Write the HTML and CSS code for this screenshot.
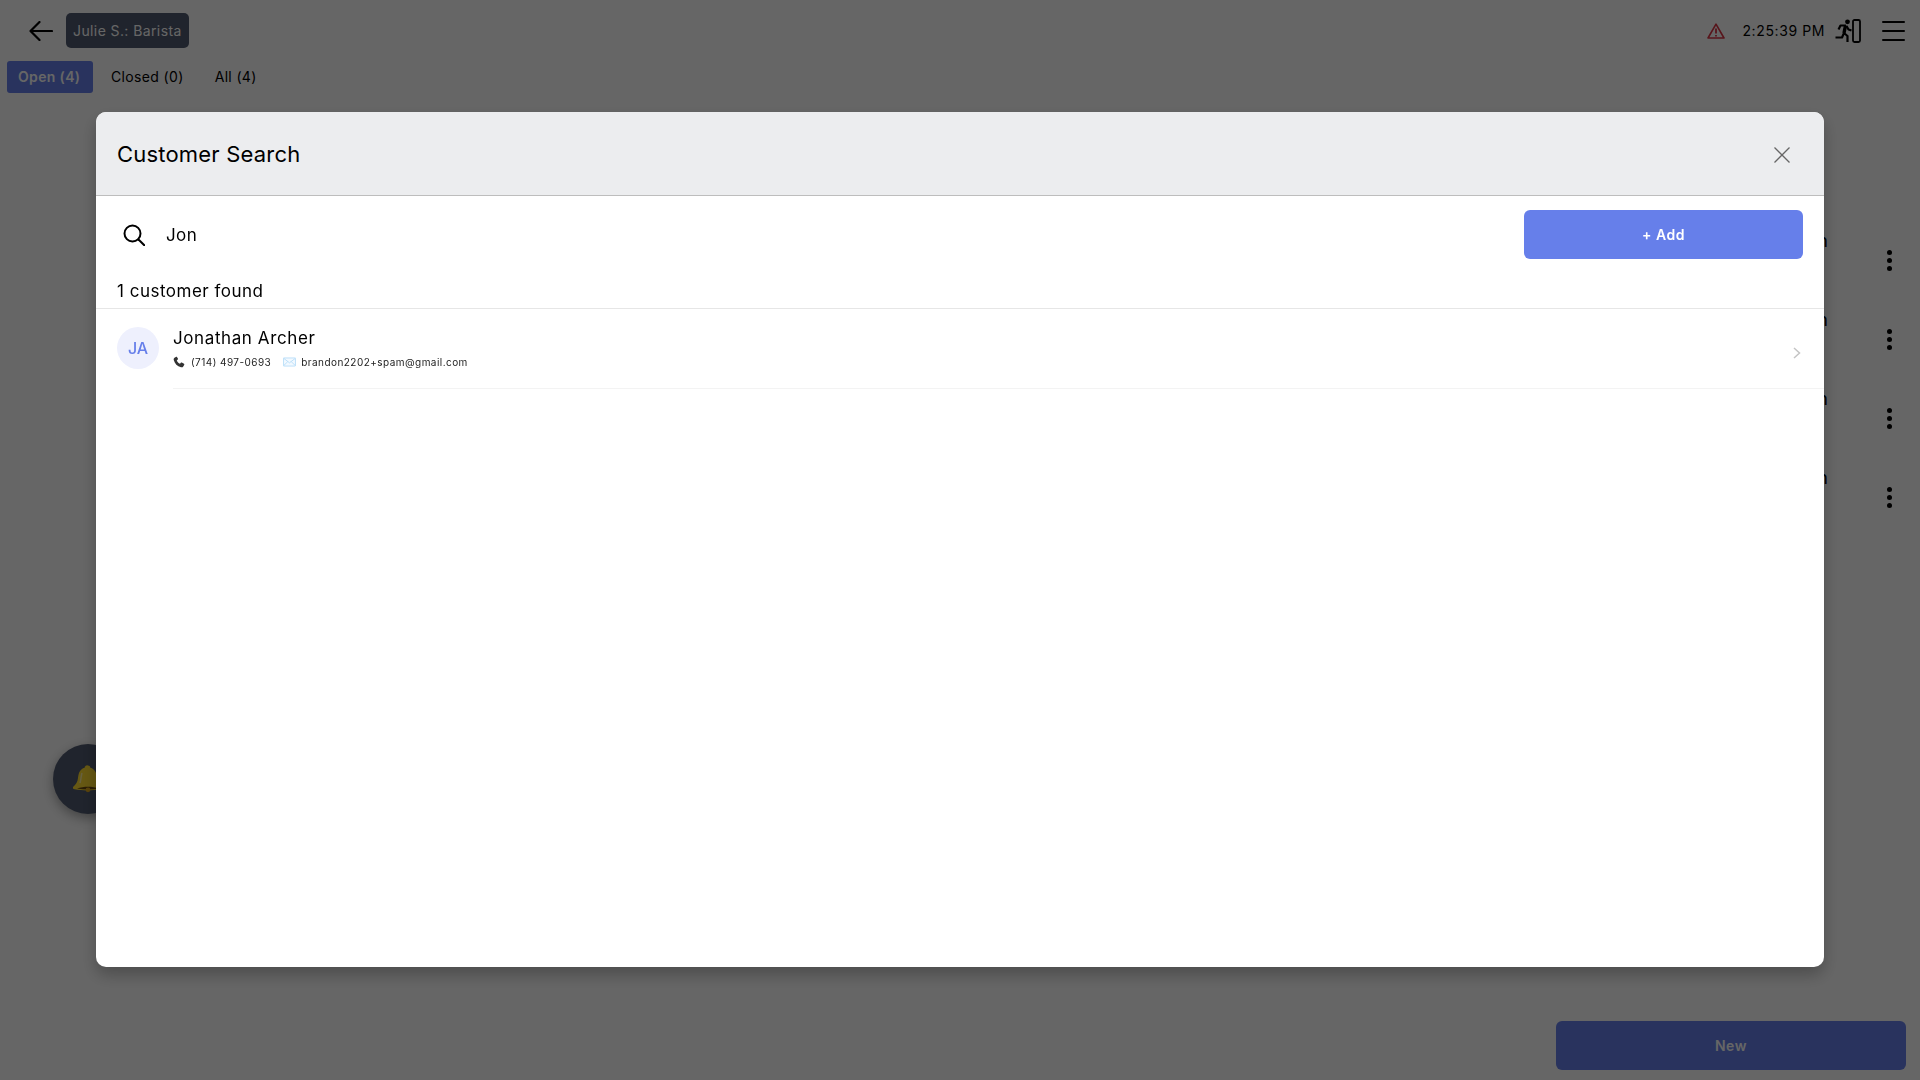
FILE: index.html
```html
<!DOCTYPE html>
<html lang="en">
<head>
    <meta charset="UTF-8">
    <title>Customer Search</title>
    <link rel="stylesheet" href="styles.css">
</head>
<body>
    <div class="page">
        <header class="topbar">
            <svg class="back-icon" viewBox="0 0 24 20" fill="none" stroke="#000" stroke-width="2.2" stroke-linecap="round" stroke-linejoin="round"><path d="M23 10H1.5M10.5 1 1.5 10l9 9"/></svg>
            <div class="user-pill">Julie S.: Barista</div>
            <div class="topbar-right">
                <svg class="alert-icon" viewBox="0 0 18 16" fill="none" stroke="#dc3545" stroke-width="1.6" stroke-linejoin="round"><path d="M9 1.2 17 15H1Z"/><path d="M9 5.5v5M9 12v1.5" stroke-width="1.8"/></svg>
                <span class="clock">2:25:39 PM</span>
                <svg class="exit-icon" viewBox="0 0 26 24" fill="none" stroke="#000" stroke-linejoin="round"><rect x="18" y="1" width="7" height="22" rx="1.5" stroke-width="1.8"/><circle cx="12.5" cy="2.8" r="2.4" fill="#000" stroke="none"/><path d="M10.5 6.5 9 14" stroke-width="3.4"/><path d="M11 6.5H5.5L3.5 10.5M11.5 7l2 3.5 3 1M9 14l3.5 3v6M9 14l-2 4.5H.5" stroke-width="2.2"/></svg>
                <div class="menu-icon"><span></span><span></span><span></span></div>
            </div>
        </header>

        <nav class="tabs">
            <div class="tab active">Open (4)</div>
            <div class="tab">Closed (0)</div>
            <div class="tab">All (4)</div>
        </nav>

        <section class="orders">
            <div class="order"><span class="order-text">n</span><div class="dots"><i></i><i></i><i></i></div></div>
            <div class="order"><span class="order-text">n</span><div class="dots"><i></i><i></i><i></i></div></div>
            <div class="order"><span class="order-text">n</span><div class="dots"><i></i><i></i><i></i></div></div>
            <div class="order"><span class="order-text">n</span><div class="dots"><i></i><i></i><i></i></div></div>
        </section>

        <footer class="bottombar">
            <button class="new-btn">New</button>
        </footer>

        <div class="bell-btn">
            <svg class="bell-icon" viewBox="0 0 30 28"><path d="M15 .5a2.5 2.5 0 0 1 2.4 2.3C22 4 23.5 8 24 13c.4 4 2 6.5 5 9 .8 1 0 2-1.5 2.3-8 1.5-18 1.5-26 0C0 24-.8 23 0 22c3-2.5 4.6-5 5-9 .5-5 2-9 6.6-10.2A2.5 2.500 0 0 1 15 .5Z" fill="#ffdc30"/><path d="M4 23.500c7 1.200 15 1.200 22 0-7-2.500-15-2.500-22 0Z" fill="#6b4a10"/><circle cx="15" cy="24.8" r="2.4" fill="#e0a81c"/><path d="M9 8c-1 3-1 7-2 10" stroke="#fff0a0" stroke-width="1.5" fill="none"/></svg>
        </div>
    </div>

    <div class="overlay">
        <div class="modal">
            <div class="modal-header">
                <h2>Customer Search</h2>
                <svg class="close-icon" viewBox="0 0 16 16" fill="none" stroke="#666" stroke-width="1.3"><path d="M.5.5l15 15M15.5.5l-15 15"/></svg>
            </div>
            <div class="search-row">
                <svg class="search-icon" viewBox="0 0 22 22" fill="none" stroke="#000" stroke-width="2" stroke-linecap="round"><circle cx="9.5" cy="9.5" r="8"/><path d="M15.5 15.5l6 6"/></svg>
                <div class="search-value">Jon</div>
                <button class="add-btn">+ Add</button>
            </div>
            <div class="result-count">1 customer found</div>
            <div class="customer">
                <div class="avatar">JA</div>
                <div class="customer-info">
                    <div class="customer-name">Jonathan Archer</div>
                    <div class="customer-meta">
                        <svg class="phone-icon" viewBox="0 0 24 24"><path fill="#333" d="M6.6 1.5 3 3.500C1.500 4.500 1 6 1.500 8c2 7.500 7 12.500 14.500 14.500 2 .5 3.500 0 4.500-1.500l2-3.500c.4-.7.2-1.400-.5-1.800l-4.500-2.700c-.7-.4-1.400-.3-1.900.3l-1.600 2c-3-1.300-5.300-3.600-6.500-6.500l2-1.700c.6-.5.7-1.200.3-1.900L7.900 2c-.3-.7-.7-.8-1.300-.5Z"/></svg>
                        <span>(714) 497-0693</span>
                        <svg class="mail-icon" viewBox="0 0 24 18" fill="#f2f9ff" stroke="#b5dcf8" stroke-width="1.6"><rect x="1" y="1.5" width="22" height="15" rx="1"/><path d="M1 2l11 8.5L23 2M1 16l8-8M23 16l-8-8" fill="none"/></svg>
                        <span>brandon2202+spam@gmail.com</span>
                    </div>
                </div>
                <svg class="chevron" viewBox="0 0 8 12" fill="none" stroke="#c4c4c4" stroke-width="1.5"><path d="M1 1l5.500 5L1 11"/></svg>
            </div>
        </div>
    </div>
</body>
</html>
```

FILE: styles.css
```css
* {
    margin: 0;
    padding: 0;
    box-sizing: border-box;
    font-family: Inter, "Liberation Sans", sans-serif;
}

body {
    height: 100vh;
    overflow: hidden;
    background: #fff;
    color: #000;
}

.page {
    height: 100vh;
    display: flex;
    flex-direction: column;
    position: relative;
}

/* Top bar */
.topbar {
    height: 61px;
    display: flex;
    align-items: center;
    padding: 0 15px 0 29px;
}

.back-icon {
    width: 24px;
    height: 20px;
    margin-right: 13px;
}

.user-pill {
    height: 35px;
    padding: 0 7px;
    display: flex;
    align-items: center;
    background: #505a70;
    border-radius: 5px;
    color: #fff;
    font-size: 14px;
    letter-spacing: 0.4px;
}

.topbar-right {
    margin-left: auto;
    display: flex;
    align-items: center;
}

.alert-icon {
    width: 18px;
    height: 16px;
    margin-right: 17px;
}

.clock {
    font-size: 14px;
    letter-spacing: 0.6px;
    margin-right: 10px;
}

.exit-icon {
    width: 26px;
    height: 24px;
    margin-right: 21px;
}

.menu-icon {
    width: 23px;
    display: flex;
    flex-direction: column;
    gap: 7px;
}

.menu-icon span {
    height: 2px;
    background: #000;
    border-radius: 1px;
}

/* Tabs */
.tabs {
    display: flex;
    padding-left: 7px;
    height: 32px;
}

.tab {
    padding: 0 11px 1px;
    margin-right: 9px;
    display: flex;
    align-items: center;
    font-size: 14px;
    letter-spacing: 0.35px;
    border-radius: 3px;
}

.tab.active {
    width: 86px;
    margin-right: 7px;
    background: #667fea;
    color: #fff;
    font-weight: 600;
}

/* Rows behind the dialog */
.orders {
    padding-top: 128px;
    flex: 1;
}

.order {
    height: 79px;
    display: flex;
    align-items: center;
    justify-content: flex-end;
    padding-right: 28px;
}

.order-text {
    font-size: 18px;
    margin-right: 59px;
    margin-top: -41px;
}

.dots {
    display: flex;
    flex-direction: column;
    gap: 3px;
}

.dots i {
    width: 5px;
    height: 5px;
    background: #000;
    border-radius: 50%;
}

.bottombar {
    display: flex;
    justify-content: flex-end;
    padding: 0 14px 10px 0;
}

.new-btn {
    width: 350px;
    height: 49px;
    border: none;
    border-radius: 6px;
    background: #667fea;
    color: #fff;
    font-size: 14px;
    font-weight: 600;
    letter-spacing: 0.6px;
}

.bell-btn {
    position: absolute;
    left: 53px;
    top: 744px;
    width: 70px;
    height: 70px;
    display: flex;
    align-items: center;
    justify-content: center;
    background: #505a70;
    border-radius: 50%;
    box-shadow: 0 4px 12px rgba(0, 0, 0, 0.35);
}

.bell-icon {
    width: 30px;
    height: 28px;
}

/* Dialog */
.overlay {
    position: fixed;
    inset: 0;
    background: rgba(0, 0, 0, 0.6);
}

.modal {
    width: 1728px;
    height: 855px;
    margin: 112px 0 0 96px;
    background: #fff;
    border-radius: 10px;
    overflow: hidden;
    box-shadow: 0 8px 16px rgba(0, 0, 0, 0.25);
}

.modal-header {
    height: 84px;
    padding: 0 21px;
    display: flex;
    align-items: center;
    justify-content: space-between;
    background: #ecedef;
    border-bottom: 1px solid #bdbdbd;
}

.modal-header h2 {
    font-size: 22px;
    font-weight: 400;
    letter-spacing: 0.2px;
}

.close-icon {
    width: 16px;
    height: 16px;
    margin-right: 13px;
    margin-top: 3px;
}

.search-row {
    height: 63px;
    padding: 14px 21px 0 27px;
    display: flex;
    align-items: center;
}

.search-icon {
    width: 22px;
    height: 22px;
    flex-shrink: 0;
}

.search-value {
    margin-left: 21px;
    font-size: 17px;
    letter-spacing: 0.4px;
    flex: 1;
}

.add-btn {
    width: 279px;
    height: 49px;
    border: none;
    border-radius: 6px;
    background: #667fea;
    color: #fff;
    font-size: 14px;
    font-weight: 600;
    letter-spacing: 0.5px;
}

.result-count {
    height: 50px;
    padding: 22px 21px 0;
    font-size: 17px;
    letter-spacing: 0.5px;
    border-bottom: 1px solid #e6e6e6;
}

.customer {
    height: 80px;
    padding-left: 21px;
    display: flex;
    position: relative;
}

.avatar {
    width: 42px;
    height: 42px;
    margin-top: 18px;
    display: flex;
    align-items: center;
    justify-content: center;
    background: #eef0fd;
    border-radius: 50%;
    color: #667fea;
    font-size: 16px;
    font-weight: 500;
}

.customer-info {
    flex: 1;
    margin-left: 14px;
    padding-top: 19px;
    border-bottom: 1px solid #f3f3f3;
}

.customer-name {
    font-size: 17px;
    letter-spacing: 0.6px;
}

.customer-meta {
    display: flex;
    align-items: center;
    margin-top: 8px;
    font-size: 10px;
    letter-spacing: 0.45px;
    color: #222;
}

.phone-icon {
    width: 12px;
    height: 12px;
    margin-right: 6px;
}

.mail-icon {
    width: 13px;
    height: 10px;
    margin: 0 5px 0 12px;
}

.chevron {
    position: absolute;
    right: 23px;
    top: 38px;
    width: 8px;
    height: 12px;
}
```
